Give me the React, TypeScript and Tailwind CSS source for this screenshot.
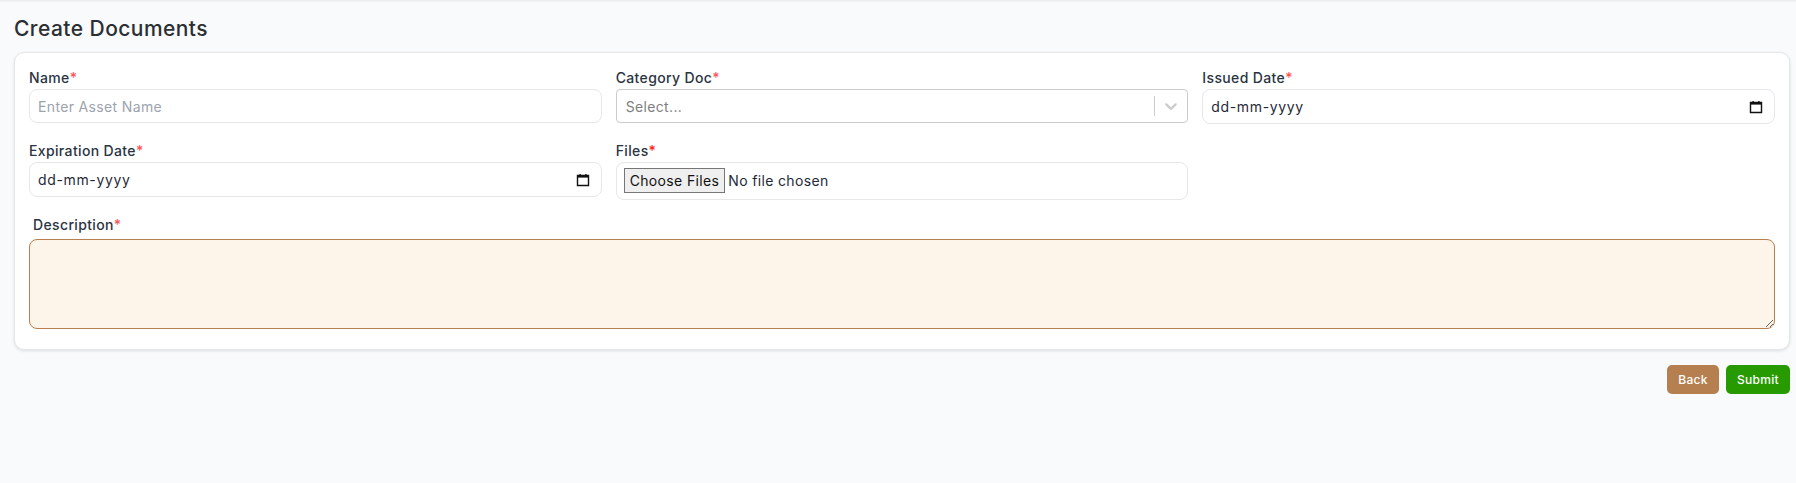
const Req = ({ strong }: { strong?: boolean }) => (
  <span className={strong ? "text-[#ff1a1a]" : "text-[#ff5257]"}>*</span>
);

const CalendarIcon = () => (
  <svg width="14" height="14" viewBox="0 0 14 14" className="shrink-0">
    <path d="M1.5 2.5h11v10h-11z" fill="none" stroke="#111" strokeWidth="1.4" />
    <path d="M1 2h12v2.6H1z" fill="#111" />
    <path d="M3.4 1h1.4v2H3.4zM9.2 1h1.4v2H9.2z" fill="#111" />
  </svg>
);

const DateField = () => (
  <div className="flex h-[35px] items-center justify-between rounded-lg border border-[#e5e7eb] bg-white pl-[8px] pr-[11px] text-[14px] tracking-[0.65px] text-[#1f2937]">
    <span className="-mt-[1px]">dd-mm-yyyy</span>
    <CalendarIcon />
  </div>
);

const labelCls = "block text-[14px] leading-[20px] font-medium tracking-[0.36px] text-[#2a3442]";

export default function App() {
  return (
    <div className="min-h-[483px] bg-gray-50 font-['Inter',sans-serif] text-[#1f2937]">
      <div className="h-[3px] bg-gradient-to-b from-[#e8eaed] to-gray-50" />
      <div className="pl-[14px] pr-[6px]">
        <h1 className="pt-[12px] text-[21px] leading-[28px] font-medium tracking-[0.44px] text-[#2b2f33]">Create Documents</h1>
        <div className="mt-[9px] rounded-[10px] border border-[#e5e7eb] bg-white px-[14px] pt-[15px] pb-[20px] shadow-[0_1px_3px_rgba(0,0,0,0.12)]">
          <div className="grid grid-cols-3 gap-x-[14px]">
            <div>
              <label className={labelCls}>Name<Req /></label>
              <input
                placeholder="Enter Asset Name"
                className="mt-[1px] h-[34px] w-full rounded-lg border border-[#e5e7eb] bg-white px-[8px] text-[14px] tracking-[0.35px] outline-none placeholder:text-[#9ca3af]"
              />
            </div>
            <div>
              <label className={labelCls}>Category Doc<Req /></label>
              <div className="mt-[1px] flex h-[34px] items-center rounded border border-[#cccccc] bg-white">
                <span className="flex-1 pl-[9px] text-[14px] tracking-[0.35px] text-[#808080]">Select...</span>
                <span className="h-[20px] w-px bg-[#cccccc]" />
                <svg width="20" height="20" viewBox="0 0 20 20" className="mx-[6px] fill-[#cccccc]">
                  <path d="M4.516 7.548c0.436-0.446 1.043-0.481 1.576 0l3.908 3.747 3.908-3.747c0.533-0.481 1.141-0.446 1.574 0 0.436 0.445 0.408 1.197 0 1.615-0.406 0.418-4.695 4.502-4.695 4.502-0.217 0.223-0.502 0.335-0.787 0.335s-0.57-0.112-0.789-0.335c0 0-4.287-4.084-4.695-4.502s-0.436-1.17 0-1.615z" />
                </svg>
              </div>
            </div>
            <div>
              <label className={labelCls}>Issued Date<Req /></label>
              <div className="mt-[1px]"><DateField /></div>
            </div>
          </div>

          <div className="mt-[17px] grid grid-cols-3 gap-x-[14px]">
            <div>
              <label className={labelCls}>Expiration Date<Req /></label>
              <div className="mt-[1px]"><DateField /></div>
            </div>
            <div>
              <label className={labelCls}>Files<Req strong /></label>
              <div className="mt-[1px] flex h-[38px] items-center rounded-lg border border-[#e5e7eb] bg-white pl-[7px] pb-[1px] text-[14px] tracking-[0.35px]">
                <input
                  type="file"
                  multiple
                  className="w-full text-[#1f2937] outline-none file:mr-[3px] file:h-[25px] file:border file:border-[#767676] file:bg-[#efefef] file:px-[5px] file:text-[#111]"
                />
              </div>
            </div>
          </div>

          <label className={`mt-[15px] pl-[4px] ${labelCls}`}>Description<Req /></label>
          <textarea className="mt-[4px] block h-[90px] w-full rounded-lg border border-[#b87f4f] bg-[#fdf5ea] outline-none" />
        </div>

        <div className="mt-[15px] flex justify-end gap-[7px]">
          <button className="h-[29px] w-[52px] rounded-[5px] bg-[#b57f50] text-[12px] font-medium tracking-[0.3px] text-white">Back</button>
          <button className="h-[29px] w-[64px] rounded-[5px] bg-[#279a00] text-[12px] font-medium tracking-[0.3px] text-white">Submit</button>
        </div>
      </div>
    </div>
  );
}
